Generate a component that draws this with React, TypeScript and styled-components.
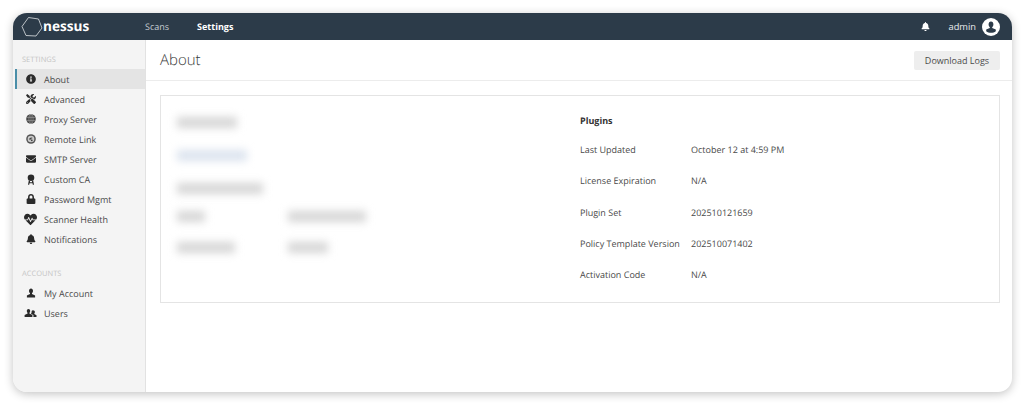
import React from "react";
import styled, { createGlobalStyle } from "styled-components";
import { FaInfoCircle, FaTools, FaEnvelope, FaLock, FaHeartbeat, FaBell } from "react-icons/fa";

const Global = createGlobalStyle`
  html, body { margin: 0; padding: 0; background: #fff; }
  body { font-family: "Open Sans", "Liberation Sans", sans-serif; width: 1024px; height: 405px; overflow: hidden; text-rendering: geometricPrecision; }
  * { box-sizing: border-box; }
`;

const Page = styled.div`
  width: 1024px;
  height: 405px;
  padding: 13px 12px 13px 13px;
`;
const Win = styled.div`
  height: 379px;
  border-radius: 14px;
  overflow: hidden;
  background: #fff;
  box-shadow: 0 2px 10px rgba(0, 0, 0, 0.24);
  display: flex;
  flex-direction: column;
`;
const TopBar = styled.header`
  height: 27px;
  flex: none;
  background: #2c3b49;
  display: flex;
  align-items: center;
  color: #fff;
  padding-left: 8px;
  padding-right: 12px;
`;
const Logo = styled.div`
  display: flex;
  align-items: center;
  width: 124px;
`;
const LogoWord = styled.span`
  font-family: "Open Sans", sans-serif;
  font-weight: 700;
  font-size: 13.6px;
  line-height: 20px;
  position: relative;
  top: -1px;
`;
const NavLink = styled.span<{ $active?: boolean }>`
  font-size: 9px;
  margin-right: 28px;
  font-weight: ${(p) => (p.$active ? 700 : 400)};
  color: ${(p) => (p.$active ? "#fff" : "#c5ccd2")};
`;
const Spacer = styled.div`
  flex: 1;
`;
const UserName = styled.span`
  font-size: 9.3px;
  margin: 0 6px 0 18px;
  color: #e8ebee;
`;
const Body = styled.div`
  flex: 1;
  display: flex;
  min-height: 0;
`;
const Side = styled.aside`
  width: 133px;
  flex: none;
  background: #f4f4f4;
  border-right: 1px solid #e2e2e2;
  padding-top: 10px;
`;
const SectionLabel = styled.div<{ $gap?: boolean }>`
  height: 19px;
  line-height: 21px;
  padding-left: 9px;
  font-size: 7.5px;
  color: #c4c4c4;
  margin-top: ${(p) => (p.$gap ? "15px" : "0")};
`;
const Item = styled.div<{ $active?: boolean }>`
  height: 20px;
  display: flex;
  align-items: center;
  font-size: 9px;
  color: #4a4a4a;
  margin-left: 2px;
  background: ${(p) => (p.$active ? "#e4e4e4" : "transparent")};
  border-left: 2px solid ${(p) => (p.$active ? "#4a8ea8" : "transparent")};
`;
const IconSlot = styled.span`
  width: 27px;
  display: flex;
  justify-content: center;
  flex: none;
  color: #2b2b2b;
`;
const Main = styled.main`
  flex: 1;
  min-width: 0;
`;
const Head = styled.div`
  height: 41px;
  border-bottom: 1px solid #ececec;
  display: flex;
  align-items: center;
  justify-content: space-between;
  padding: 0 12px 0 14px;
`;
const Title = styled.h1`
  margin: 0;
  font-size: 15px;
  font-weight: 300;
  color: #3a3a3a;
`;
const Btn = styled.button`
  width: 86px;
  height: 19px;
  border: none;
  border-radius: 2px;
  background: #eeeeee;
  color: #4a4a4a;
  font: 400 9px "Open Sans", sans-serif;
  padding: 0;
`;
const Card = styled.section`
  margin: 14px 12px 0 14px;
  height: 208px;
  border: 1px solid #e4e4e4;
  display: grid;
  grid-template-columns: 419px 1fr;
`;
const Blurred = styled.div`
  padding-left: 16px;
  display: grid;
  grid-template-columns: 111px 1fr;
  grid-template-rows: 32px 33px 33px 28px 31px;
  align-content: start;
`;
const Smudge = styled.div<{ $w: number; $c?: string; $span?: boolean }>`
  align-self: end;
  width: ${(p) => p.$w}px;
  height: 11px;
  background: ${(p) => p.$c || "#d6d6d6"};
  filter: blur(4.5px);
  grid-column: ${(p) => (p.$span ? "1 / -1" : "auto")};
`;
const Info = styled.div`
  padding-top: 17px;
`;
const InfoHead = styled.div`
  font-size: 9px;
  font-weight: 700;
  color: #333;
  height: 15px;
  line-height: 15px;
  margin-bottom: 14px;
`;
const Row = styled.div`
  display: flex;
  height: 15px;
  line-height: 15px;
  margin-bottom: 16.3px;
  font-size: 9px;
  color: #4a4a4a;
`;
const Key = styled.span`
  width: 111px;
  flex: none;
`;

const Hex = () => (
  <svg width="22" height="22" viewBox="0 0 22 22" fill="none" stroke="#dfe3e6" strokeWidth="0.8">
    <path d="M7.5 1.5 L17.5 3 L21 12 L15 20 L5 19.5 L1 10.5 Z" />
  </svg>
);

const Bust = ({ s = 10, c = "currentColor" }: { s?: number; c?: string }) => (
  <svg width={s} height={s} viewBox="0 0 10 10" fill={c}>
    <path d="M5 .4C3.8.4 3 1.4 3 2.8c0 1 .4 1.900 1 2.300v.9L.9 7.500V9.600h8.200V7.500L6 6v-.9c.6-.4 1-1.300 1-2.300C7 1.400 6.200.4 5 .4z" />
  </svg>
);
const Avatar = () => (
  <svg width="18" height="18" viewBox="0 0 18 18">
    <circle cx="9" cy="9" r="9" fill="#fff" />
    <path fill="#2c3b49" d="M9 3.600c-1.500 0-2.400 1.200-2.400 2.800 0 1.100.5 2.100 1.200 2.600v1L4.200 11.600v1.600c1.200 1 3 1.600 4.800 1.600s3.600-.6 4.800-1.600v-1.600L10.200 10V9c.7-.5 1.200-1.500 1.200-2.600 0-1.600-.9-2.800-2.400-2.800z" />
  </svg>
);
const Users = () => (
  <svg width="13" height="10" viewBox="0 0 13 10" fill="currentColor">
    <path d="M4.500 1C3.500 1 2.800 1.800 2.800 3c0 .8.3 1.500.8 1.900v.7L.6 7v2h7.800V7L5.400 5.600v-.7c.5-.4.8-1.100.8-1.900C6.200 1.800 5.500 1 4.500 1z" />
    <path d="M9 2.200c-.6 0-1.100.3-1.400.8.200.9 0 1.900-.5 2.500v.4l2.300 1.100V9h3.100V7.300L10.300 6.100v-.6c.4-.3.6-.9.6-1.500C10.900 3 10.100 2.200 9 2.200z" />
  </svg>
);
const Globe = () => (
  <svg width="10" height="10" viewBox="0 0 10 10">
    <circle cx="5" cy="5" r="4.800" fill="#444" />
    <g stroke="#b5b5b5" strokeWidth="0.5" fill="none">
      <ellipse cx="5" cy="5" rx="2.100" ry="4.600" />
      <path d="M.6 3.400h8.800M.6 6.600h8.800M5 .4v9.200" />
    </g>
  </svg>
);
const Remote = () => (
  <svg width="10" height="10" viewBox="0 0 10 10">
    <circle cx="5" cy="5" r="4.800" fill="#555" />
    <circle cx="5" cy="5" r="3.300" fill="#c9c9c9" />
    <path d="M3 5.800C3 3.800 5.200 2.800 6.800 4 5.600 4 5 4.800 5.200 6 4.400 5.400 3.700 5.400 3 5.800z" fill="#444" />
    <circle cx="5.800" cy="6.300" r="0.900" fill="#444" />
  </svg>
);
const Ribbon = () => (
  <svg width="10" height="11" viewBox="0 0 10 11" fill="currentColor">
    <circle cx="5" cy="3.700" r="3.300" />
    <path d="M2.800 6.500h1.200v1.700h2V6.500h1.200l.8 4.300H6.800l-.3-1.600h-3l-.3 1.600H2z" />
  </svg>
);

const sz = 10;
const items: [string, React.ReactNode][] = [
  ["About", <FaInfoCircle size={sz} />],
  ["Advanced", <FaTools size={sz} />],
  ["Proxy Server", <Globe />],
  ["Remote Link", <Remote />],
  ["SMTP Server", <FaEnvelope size={sz} />],
  ["Custom CA", <Ribbon />],
  ["Password Mgmt", <FaLock size={sz} />],
  ["Scanner Health", <FaHeartbeat size={13} />],
  ["Notifications", <FaBell size={sz} />],
];
const rows: [string, string][] = [
  ["Last Updated", "October 12 at 4:59 PM"],
  ["License Expiration", "N/A"],
  ["Plugin Set", "202510121659"],
  ["Policy Template Version", "202510071402"],
  ["Activation Code", "N/A"],
];

export default function App() {
  return (
    <Page>
      <Global />
      <Win>
        <TopBar>
          <Logo>
            <Hex />
            <LogoWord>nessus</LogoWord>
          </Logo>
          <NavLink>Scans</NavLink>
          <NavLink $active>Settings</NavLink>
          <Spacer />
          <FaBell size={9} />
          <UserName>admin</UserName>
          <Avatar />
        </TopBar>
        <Body>
          <Side>
            <SectionLabel>SETTINGS</SectionLabel>
            {items.map(([label, icon], i) => (
              <Item key={label} $active={i === 0}>
                <IconSlot>{icon}</IconSlot>
                {label}
              </Item>
            ))}
            <SectionLabel $gap>ACCOUNTS</SectionLabel>
            <Item>
              <IconSlot><Bust /></IconSlot>
              My Account
            </Item>
            <Item>
              <IconSlot><Users /></IconSlot>
              Users
            </Item>
          </Side>
          <Main>
            <Head>
              <Title>About</Title>
              <Btn>Download Logs</Btn>
            </Head>
            <Card>
              <Blurred>
                <Smudge $w={60} $span />
                <Smudge $w={70} $c="#dbe3ee" $span />
                <Smudge $w={86} $span />
                <Smudge $w={28} />
                <Smudge $w={78} />
                <Smudge $w={58} />
                <Smudge $w={40} />
              </Blurred>
              <Info>
                <InfoHead>Plugins</InfoHead>
                {rows.map(([k, v]) => (
                  <Row key={k}>
                    <Key>{k}</Key>
                    <span>{v}</span>
                  </Row>
                ))}
              </Info>
            </Card>
          </Main>
        </Body>
      </Win>
    </Page>
  );
}
